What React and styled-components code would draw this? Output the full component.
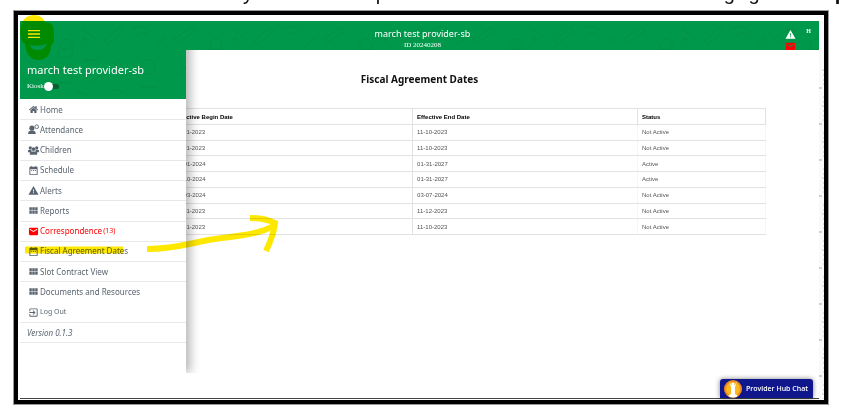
import React from "react";
import styled, { createGlobalStyle } from "styled-components";
import {
  MdDateRange,
  MdWarning,
  MdViewModule,
  MdEmail,
  MdOutlineExitToApp,
  MdMenu,
} from "react-icons/md";
import { FaHome } from "react-icons/fa";

const AttendanceIcon = ({ size }) => (
  <svg width={size} height={size} viewBox="0 0 24 24" aria-hidden="true">
    <circle cx="8.5" cy="9" r="5.5" fill="currentColor" />
    <path d="M0 22c0-6 3-8 8.500-8s8.500 2 8.500 8z" fill="currentColor" />
    <circle cx="19" cy="6" r="4" fill="none" stroke="currentColor" strokeWidth="2" />
  </svg>
);

const ChildrenIcon = ({ size }) => (
  <svg width={size} height={size} viewBox="0 0 24 24" fill="currentColor" aria-hidden="true">
    <circle cx="5" cy="6" r="3.500" />
    <circle cx="19" cy="6" r="3.500" />
    <circle cx="12" cy="9" r="4" />
    <path d="M0 16v-4l3-2h4l1 4-3 2zM24 16v-4l-3-2h-4l-1 4 3 2z" />
    <path d="M4 21v-5l4-2h8l4 2v5z" />
  </svg>
);

const menuItems = [
  { label: "Home", icon: FaHome, size: 9 },
  { label: "Attendance", icon: AttendanceIcon },
  { label: "Children", icon: ChildrenIcon },
  { label: "Schedule", icon: MdDateRange },
  { label: "Alerts", icon: MdWarning },
  { label: "Reports", icon: MdViewModule },
  { label: "Correspondence", icon: MdEmail, count: 13, alert: true },
  { label: "Fiscal Agreement Dates", icon: MdDateRange },
  { label: "Slot Contract View", icon: MdViewModule },
  { label: "Documents and Resources", icon: MdViewModule, plain: true },
  { label: "Log Out", icon: MdOutlineExitToApp, small: true },
];

const agreements = [
  { id: 1, begin: "11-01-2023", end: "11-10-2023", status: "Not Active" },
  { id: 2, begin: "11-01-2023", end: "11-10-2023", status: "Not Active" },
  { id: 3, begin: "02-01-2024", end: "01-31-2027", status: "Active" },
  { id: 4, begin: "01-10-2024", end: "01-31-2027", status: "Active" },
  { id: 5, begin: "01-03-2024", end: "03-07-2024", status: "Not Active" },
  { id: 6, begin: "11-01-2023", end: "11-12-2023", status: "Not Active" },
  { id: 7, begin: "11-01-2023", end: "11-10-2023", status: "Not Active" },
];

const Doodles = () => (
  <DoodleSvg aria-hidden="true">
    <defs>
      <pattern id="doodle" width="150" height="78" patternUnits="userSpaceOnUse">
        <g fill="none" stroke="#0a7a3e" strokeWidth="1">
          <path d="M4 18l18-12 3 4-18 12zM40 30v-8q6-8 12 0v14H38v-6M42 28h8" />
          <path d="M62 8l14 10M62 18h6M65 15v6M84 20l16-14 3 4-16 14z" />
          <path d="M112 8q10-6 18 2M116 14q6-4 12 0M136 24l10-8" />
          <path d="M8 40l14 14M8 54q6-10 16-8M34 46h18v16H34zM38 50h10" />
          <path d="M64 38q8 4 16-2M66 56l12-8 4 6-12 8zM94 40l10 18M98 38l10 18" />
          <circle cx="128" cy="46" r="7" />
          <path d="M120 66h18M14 68q8-6 16 2M56 70l12 4M92 70q8-4 14 4" />
        </g>
      </pattern>
    </defs>
    <rect width="100%" height="100%" fill="url(#doodle)" />
  </DoodleSvg>
);

const Ruler = () => (
  <RulerStrip aria-hidden="true">
    <svg width="5" height="100%">
      <defs>
        <pattern id="ticks" y="35" width="5" height="36" patternUnits="userSpaceOnUse">
          <path d="M4 5h1M4 10h1M3 14h2M4 19h1M4 24h1M4 28h1" stroke="#c4c6c8" />
          <path d="M0 32h3" stroke="#a4a6a8" />
        </pattern>
      </defs>
      <rect y="47" width="5" height="100%" fill="url(#ticks)" />
    </svg>
  </RulerStrip>
);

const Marker = () => (
  <MarkerSvg viewBox="0 0 847 414" aria-hidden="true">
    <g fill="none" stroke="#ffe800">
      <path d="M25 250L123 250" strokeWidth="7" />
      <path d="M147 249C180 249 195 241 222 238C247 235 262 233 275 225" strokeWidth="6" />
      <path d="M250 218Q264 218 275 223Q274 234 266 251" strokeWidth="6" />
    </g>
    <path
      d="M20 30Q22 15 34 15Q42 15 45 22L50 23Q54 25 54 34V42Q52 44 51 46Q50 60 38 60Q27 60 25 44Q20 42 20 30ZM30 45Q31 50 38 50Q44 50 47 44Q38 47 30 45Z"
      fill="#ffe800"
      fillRule="evenodd"
    />
  </MarkerSvg>
);

const App = () => {
  return (
    <>
      <GlobalStyle />
      <Page>
        <Caption aria-hidden="true">
          <span>y</span>
          <span>p</span>
          <span>g</span>
          <span>g</span>
          <b>p</b>
        </Caption>
        <Frame>
          <Screen>
            <TopBar>
              <Doodles />
              <Provider>
                <ProviderName>march test provider-sb</ProviderName>
                <ProviderId>ID 20240208</ProviderId>
              </Provider>
              <TopActions>
                <IconButton aria-label="Alerts">
                  <MdWarning size={11} />
                </IconButton>
                <IconButton aria-label="Correspondence" $alert>
                  <MdEmail size={11} />
                </IconButton>
              </TopActions>
              <Corner>H</Corner>
            </TopBar>
            <Content>
              <Title>Fiscal Agreement Dates</Title>
              <Table>
                <thead>
                  <tr>
                    <Th $w="14%">Id</Th>
                    <Th $w="35%">Effective Begin Date</Th>
                    <Th>Effective End Date</Th>
                    <Th $w="128px">Status</Th>
                  </tr>
                </thead>
                <tbody>
                  {agreements.map((row) => (
                    <tr key={row.id}>
                      <Td>{row.id}</Td>
                      <Td>{row.begin}</Td>
                      <Td>{row.end}</Td>
                      <Td>{row.status}</Td>
                    </tr>
                  ))}
                </tbody>
              </Table>
            </Content>
            <Drawer>
              <DrawerHead>
                <Doodles />
                <MenuButton aria-label="Menu">
                  <MdMenu size={16} />
                </MenuButton>
                <DrawerName>march test provider-sb</DrawerName>
                <Kiosk>
                  Kiosk
                  <Switch type="checkbox" />
                </Kiosk>
              </DrawerHead>
              <Menu>
                {menuItems.map(({ label, icon: Icon, size, count, alert, plain, small }) => (
                  <MenuRow key={label} $plain={plain}>
                    <MenuLink href="#" $alert={alert} $small={small}>
                      <IconSlot>
                        <Icon size={size || 11} />
                      </IconSlot>
                      {label}
                      {count && <Count>({count})</Count>}
                    </MenuLink>
                  </MenuRow>
                ))}
                <Version>Version 0.1.3</Version>
              </Menu>
            </Drawer>
            <ChatButton>
              <ChatLogo viewBox="0 0 18 18" aria-hidden="true">
                <circle cx="9" cy="9" r="9" fill="#f08a1d" />
                <circle cx="9" cy="9" r="7" fill="#fbb91f" />
                <circle cx="9" cy="4" r="1.500" fill="#fff" />
                <path d="M5 1l2 4h4l2-4-2 6v7l3 2q-5 3-10 0l3-2V7z" fill="#fff" />
              </ChatLogo>
              Provider Hub Chat
            </ChatButton>
          </Screen>
          <Ruler />
        </Frame>
        <Marker />
      </Page>
    </>
  );
};

export default App;

const GlobalStyle = createGlobalStyle`
  * {
    box-sizing: border-box;
  }
  body {
    margin: 0;
    background: #fff;
    font-family: "Noto Sans", "Open Sans", sans-serif;
  }
  button {
    border: 0;
    padding: 0;
    background: none;
    font-family: inherit;
  }
`;

const Page = styled.div`
  position: relative;
  display: flex;
  flex-direction: column;
  min-height: 100vh;
`;
const Caption = styled.div`
  display: grid;
  grid-template-columns: 134fr 351fr 25fr 87fr 7fr;
  align-items: end;
  align-content: end;
  height: 11px;
  padding: 0 0 8px 243px;
  overflow: hidden;
  font: 20px/20px "Liberation Sans", sans-serif;
  color: #111;
`;
const Frame = styled.div`
  flex: 1;
  display: flex;
  margin: 0 19px 10px 14px;
  border: 4px solid #000;
  outline: 1px solid #999;
  padding: 6px 0 1px 2px;
`;
const Screen = styled.div`
  position: relative;
  flex: 1;
  border-bottom: 1px solid #444;
`;
const DoodleSvg = styled.svg`
  position: absolute;
  inset: 0;
  width: 100%;
  height: 100%;
  opacity: 0.25;
`;
const TopBar = styled.header`
  position: relative;
  display: flex;
  justify-content: center;
  height: 29px;
  overflow: hidden;
  background: #00984a;
  color: #fff;
`;
const Provider = styled.div`
  position: relative;
  padding-top: 7px;
  text-align: center;
  margin-left: 6px;
`;
const ProviderName = styled.div`
  font-size: 9px;
  line-height: 12px;
`;
const ProviderId = styled.div`
  font: 7px/10px "Liberation Serif", serif;
`;
const TopActions = styled.div`
  position: absolute;
  right: 23px;
  top: 8px;
  display: flex;
  flex-direction: column;
  gap: 1px;
`;
const IconButton = styled.button`
  display: flex;
  height: 11px;
  color: ${(props) => (props.$alert ? "#f00" : "#fff")};
`;
const Corner = styled.span`
  position: absolute;
  right: 8px;
  top: 6px;
  font: bold 6px/8px "Liberation Serif", serif;
`;
const Content = styled.main`
  padding: 22px 53px 0;
`;
const Title = styled.h1`
  margin: 0 0 22px;
  font-size: 10px;
  line-height: 14px;
  font-weight: 700;
  text-align: center;
  color: #111;
`;
const Table = styled.table`
  width: 100%;
  height: 127px;
  table-layout: fixed;
  border-collapse: collapse;
  border: 1px solid #e2e2e2;
  font: 6px/8px "Liberation Sans", sans-serif;
  color: #555;
`;
const Th = styled.th`
  width: ${(props) => props.$w || "auto"};
  height: 16px;
  padding: 0 4px;
  border: 1px solid #e2e2e2;
  text-align: left;
  color: #000;
  &:last-child {
    border-left-color: #f6f6f6;
  }
`;
const Td = styled.td`
  padding: 0 4px;
  border: 1px solid #e2e2e2;
  border-right-color: #f6f6f6;
  &:nth-child(2) {
    border-right-color: #e2e2e2;
  }
`;
const Drawer = styled.nav`
  position: absolute;
  left: 0;
  top: 0;
  width: 166px;
  height: 352px;
  background: #fff;
  box-shadow: 4px 0 10px rgb(0 0 0 / 30%);
  clip-path: polygon(0 0, 100% 0, 100% 29px, 200px 29px, 200px 100%, 0 100%);
`;
const DrawerHead = styled.div`
  position: relative;
  height: 78px;
  padding: 5px 6px;
  background: #00984a;
  color: #fff;
`;
const MenuButton = styled.button`
  position: relative;
  display: flex;
  color: #fff;
`;
const DrawerName = styled.div`
  position: relative;
  margin: 20px 0 0 1px;
  font-size: 11px;
  line-height: 16px;
`;
const Kiosk = styled.label`
  position: relative;
  display: flex;
  align-items: center;
  height: 16px;
  margin-left: 1px;
  font: 7px/16px "Liberation Serif", serif;
`;
const Switch = styled.input`
  appearance: none;
  position: relative;
  width: 15px;
  height: 5px;
  margin: 0;
  border-radius: 3px;
  background: #075f32;
  &::before {
    content: "";
    position: absolute;
    left: 0;
    top: -2px;
    width: 9px;
    height: 9px;
    border-radius: 50%;
    background: #fff;
  }
`;
const Menu = styled.ul`
  display: grid;
  grid-auto-rows: 1fr;
  min-height: 244px;
  margin: 0;
  padding: 1px 0 0;
  list-style: none;
`;
const MenuRow = styled.li`
  display: flex;
  align-items: center;
  padding-left: 8px;
  border-bottom: 1px solid ${(props) => (props.$plain ? "transparent" : "#e8e8e8")};
`;
const MenuLink = styled.a`
  display: flex;
  align-items: center;
  gap: 1px;
  font-size: ${(props) => (props.$small ? "7px" : "8px")};
  line-height: 12px;
  text-decoration: none;
  color: ${(props) => (props.$alert ? "#f00" : "#5a6470")};
`;
const IconSlot = styled.span`
  display: flex;
  justify-content: center;
  width: 11px;
`;
const Count = styled.span`
  font-size: 7px;
`;
const Version = styled(MenuRow)`
  padding-left: 7px;
  font-size: 8px;
  font-style: italic;
  color: #5a6470;
`;
const ChatButton = styled.button`
  position: absolute;
  right: 6px;
  bottom: 0;
  display: flex;
  align-items: center;
  gap: 4px;
  height: 19px;
  padding: 0 5px 0 4px;
  border-radius: 3px 3px 0 0;
  background: #10178c;
  box-shadow: 0 0 5px rgb(0 0 0 / 50%);
  color: #fff;
  font-family: "Open Sans", sans-serif;
  font-size: 7px;
  font-weight: 600;
`;
const ChatLogo = styled.svg`
  width: 18px;
  height: 18px;
`;
const RulerStrip = styled.div`
  display: flex;
  width: 5px;
  background: #f8f9fb;
`;
const MarkerSvg = styled.svg`
  position: absolute;
  left: 0;
  top: 0;
  width: 847px;
  height: 414px;
  pointer-events: none;
  mix-blend-mode: multiply;
`;
